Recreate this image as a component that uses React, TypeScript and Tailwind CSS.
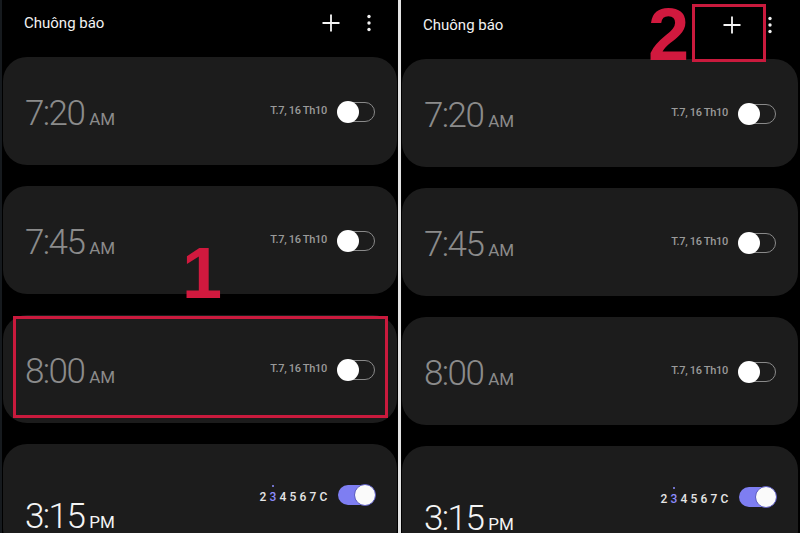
import { Fragment } from "react";

type Alarm = {
  time: string;
  period: string;
  date?: string;
  on: boolean;
};

const alarms: Alarm[] = [
  { time: "7:20", period: "AM", date: "T.7, 16 Th10", on: false },
  { time: "7:45", period: "AM", date: "T.7, 16 Th10", on: false },
  { time: "8:00", period: "AM", date: "T.7, 16 Th10", on: false },
  { time: "3:15", period: "PM", on: true },
];

const days = ["2", "3", "4", "5", "6", "7", "C"];

function PlusIcon() {
  return (
    <svg width="20" height="20" viewBox="0 0 20 20" fill="none">
      <path d="M10 1.5V18.5M1.5 10H18.5" stroke="#f5f5f5" strokeWidth="1.8" />
    </svg>
  );
}

function MoreIcon() {
  return (
    <svg width="6" height="18" viewBox="0 0 6 18" fill="#f0f0f0">
      <circle cx="3" cy="2.5" r="1.7" />
      <circle cx="3" cy="9" r="1.7" />
      <circle cx="3" cy="15.5" r="1.7" />
    </svg>
  );
}

function Toggle({ on }: { on: boolean }) {
  if (on) {
    return (
      <div className="relative w-[37px] h-[20px] rounded-full bg-[#7e7ef2]">
        <div className="absolute right-[-1px] top-[-1px] w-[22px] h-[22px] rounded-full bg-[#fafafa] border border-[#5a5ac0]" />
      </div>
    );
  }
  return (
    <div className="relative w-[38px] h-[20px]">
      <div className="absolute left-[6px] right-0 top-0 bottom-0 rounded-full border-[1.5px] border-[#8a8a8a]" />
      <div className="absolute left-0 top-[-1px] w-[22px] h-[22px] rounded-full bg-white" />
    </div>
  );
}

function Card({ alarm }: { alarm: Alarm }) {
  const timeColor = alarm.on ? "text-[#f4f4f4]" : "text-[#8b8b8b]";
  if (alarm.on) {
    return (
      <div className="h-[108px] shrink-0 rounded-[24px] bg-[#1c1c1c] flex items-start pl-[22px] pr-[22px] pt-[41px]">
        <div className={"flex items-baseline mt-[14px] " + timeColor}>
          <span className="text-[35px] leading-none font-light tracking-[-1.6px]">{alarm.time}</span>
          <span className="text-[17px] leading-none ml-[5px]">{alarm.period}</span>
        </div>
        <div className="flex-1" />
        <div className="flex items-center gap-[3.5px] text-[12px] font-medium text-[#e6e6e6] mt-[3px]">
          {days.map((d) => (
            <Fragment key={d}>
              {d === "3" ? (
                <span className="relative w-[6.5px] text-center text-[#8d8dff]">
                  {d}
                  <span className="absolute left-[2.5px] top-[-3px] w-[2px] h-[2px] rounded-full bg-[#8d8dff]" />
                </span>
              ) : (
                <span className="w-[6.5px] text-center">{d}</span>
              )}
            </Fragment>
          ))}
        </div>
        <div className="ml-[12px]">
          <Toggle on />
        </div>
      </div>
    );
  }
  return (
    <div className="h-[108px] shrink-0 rounded-[24px] bg-[#1c1c1c] flex items-center pl-[22px] pr-[22px]">
      <div className={"flex items-baseline mt-[5px] " + timeColor}>
        <span className="text-[35px] leading-none font-light tracking-[-1.6px]">{alarm.time}</span>
        <span className="text-[17px] leading-none ml-[5px]">{alarm.period}</span>
      </div>
      <div className="flex-1" />
      <span className="text-[11px] font-medium text-[#9a9a9a] tracking-[-0.3px] mt-[1px]">{alarm.date}</span>
      <div className="ml-[10px] mt-[1px]">
        <Toggle on={false} />
      </div>
    </div>
  );
}

function Panel({ second }: { second: boolean }) {
  return (
    <div
      className={
        "relative h-[533px] overflow-hidden bg-black flex flex-col " +
        (second ? "w-[399px] pl-[1px] pr-[2px] pt-[2px]" : "w-[398px] border-l-[2px] border-[#161a1e] px-[1px]")
      }
    >
      <div className="h-[46px] shrink-0 flex items-center pl-[21px]">
        <span className="text-[15px] text-[#f2f2f2]">Chuông báo</span>
        <div className="flex-1" />
        <PlusIcon />
        <div className="ml-[25px] mr-[25px]">
          <MoreIcon />
        </div>
      </div>
      <div className="flex flex-col gap-[21px] pt-[11px]">
        {alarms.map((a) => (
          <Card key={a.time} alarm={a} />
        ))}
      </div>

      {second ? (
        <>
          <div className="absolute left-[247px] top-[-2px] text-[74px] leading-none font-bold text-[#d1193e] font-['Liberation_Sans',sans-serif]">
            2
          </div>
          <div className="absolute left-[291px] top-[4px] w-[74px] h-[58px] border-[3px] border-[#c91a3d]" />
        </>
      ) : (
        <>
          <div className="absolute left-[180px] top-[237px] text-[72px] leading-none font-bold text-[#d1193e] font-['Liberation_Sans',sans-serif]">
            1
          </div>
          <div className="absolute left-[11px] top-[316px] w-[375px] h-[102px] border-[3px] border-[#c91a3d]" />
        </>
      )}
    </div>
  );
}

export default function App() {
  return (
    <div className="w-[800px] h-[533px] flex bg-black font-['Roboto',sans-serif] overflow-hidden">
      <Panel second={false} />
      <div className="w-[3px] h-full bg-[#e4e4e4]" />
      <Panel second />
    </div>
  );
}
